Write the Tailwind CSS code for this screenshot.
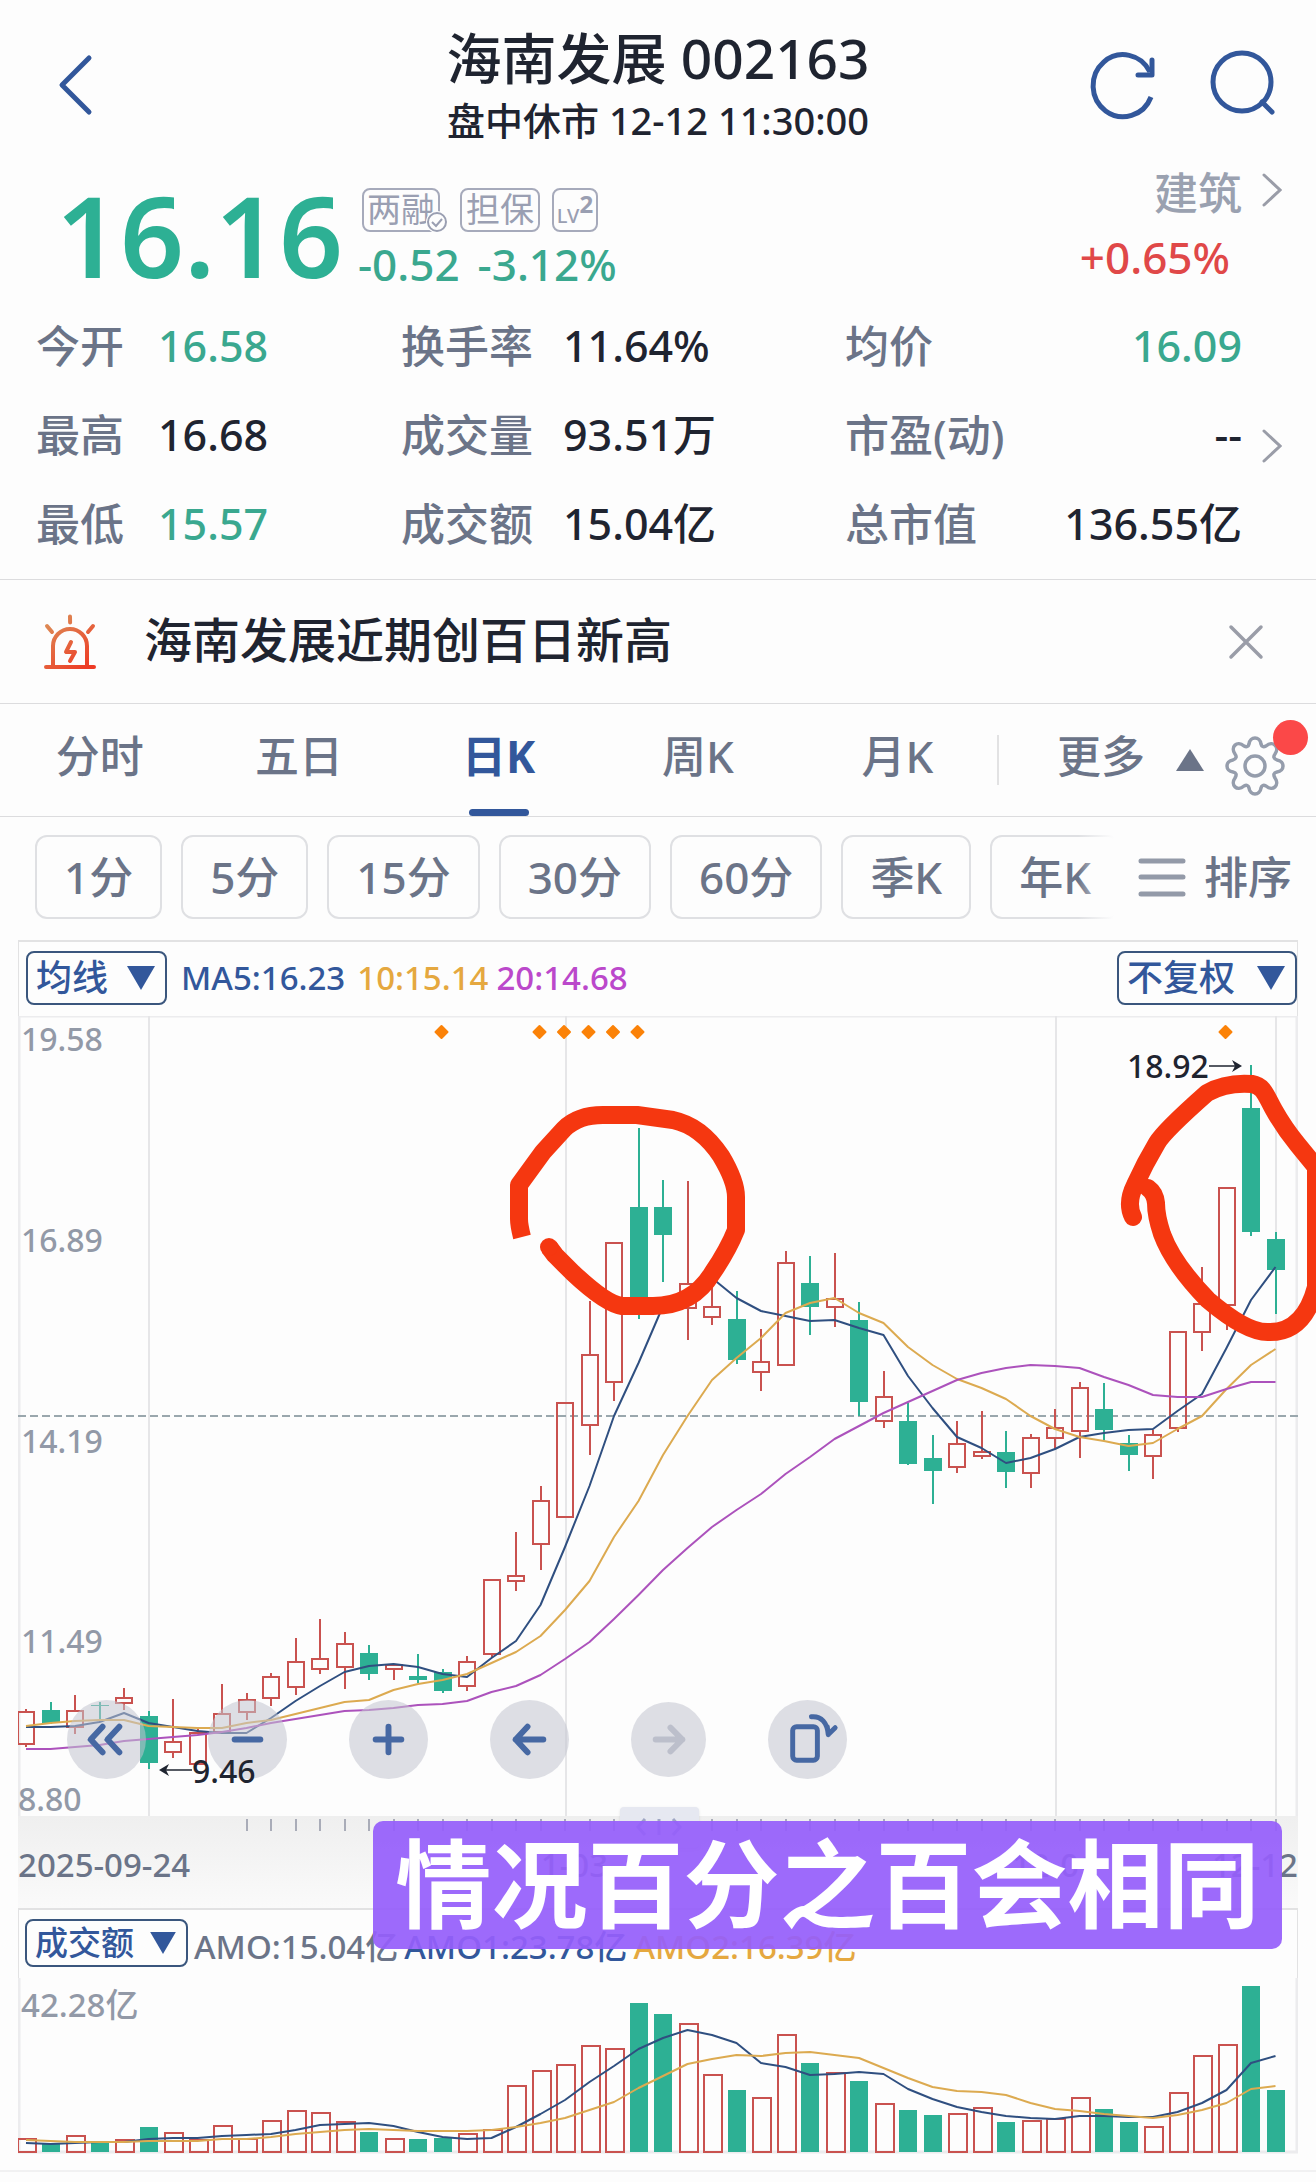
<!DOCTYPE html>
<html lang="zh-CN">
<head>
  <meta charset="UTF-8" />
  <meta name="viewport" content="width=device-width, initial-scale=1.0" />
  <title>海南发展 002163</title>
  <script src="https://cdn.jsdelivr.net/npm/@tailwindcss/browser@4"></script>
</head>
<body class="bg-[#fdfdfd] text-[#1f2430] font-medium font-['Noto_Sans','Noto_Sans_CJK_SC',sans-serif] overflow-x-hidden">

  <!-- Header -->
  <header class="flex items-start justify-between pt-7 pl-[58px] pr-[38px]">
    <button type="button" aria-label="返回" class="w-[172px] pt-[26px] text-[#32579b]">
      <svg class="w-9 h-[62px]" viewBox="0 0 36 62" fill="none" stroke="currentColor" stroke-width="5" stroke-linecap="round" stroke-linejoin="round">
        <path d="M31 4L4 31l27 27" />
      </svg>
    </button>
    <div class="text-center whitespace-nowrap">
      <h1 class="text-[55px] leading-[60px] font-medium">海南发展 002163</h1>
      <p class="mt-2 pb-1 text-[38px] leading-12">盘中休市 12-12 11:30:00</p>
    </div>
    <div class="flex gap-[52px] pt-[20px] text-[#32579b]">
      <button type="button" aria-label="刷新">
        <svg class="size-[70px] overflow-visible" viewBox="0 0 70 70" fill="none" stroke="currentColor" stroke-width="5">
          <path d="M65 49A30 31 0 1 1 64 24" />
          <path d="M66 12v15H52" stroke-linejoin="round" stroke-linecap="round" />
        </svg>
      </button>
      <button type="button" aria-label="搜索">
        <svg class="size-[70px]" viewBox="0 0 70 70" fill="none" stroke="currentColor" stroke-width="5" stroke-linecap="round">
          <ellipse cx="34" cy="34" rx="29" ry="29" />
          <path d="M54 54l10 10" />
        </svg>
      </button>
    </div>
  </header>

  <!-- Price -->
  <section class="flex pt-9 pl-[56px] pr-[34px] h-[142px] whitespace-nowrap">
    <div class="w-[302px] text-[112px] leading-[102px] font-semibold text-[#2db094]">16.16</div>
    <div class="flex-1">
      <div class="flex gap-5 pt-1 pl-1 text-[#9a9fb2]">
        <span class="relative border-2 border-[#a6aabb] rounded-lg w-[78px] h-[44px] text-[34px] leading-[38px] text-center font-normal">两融
          <svg class="absolute -right-[10px] -bottom-[3px] size-[22px] bg-[#fdfdfd] rounded-full" viewBox="0 0 22 22" fill="none" stroke="currentColor" stroke-width="2">
            <circle cx="11" cy="11" r="9" /><path d="M6 11l4 4 6-7" />
          </svg>
        </span>
        <span class="border-2 border-[#a6aabb] rounded-lg w-[80px] h-[44px] text-[34px] leading-[38px] text-center font-normal">担保</span>
        <span class="flex justify-center -ml-2 border-2 border-[#a6aabb] rounded-lg w-[46px] h-[44px]">
          <span class="self-end text-[20px] leading-7">LV</span><span class="text-[24px] leading-7 font-bold">2</span>
        </span>
      </div>
      <div class="flex gap-[18px] mt-1 text-[44px] leading-[56px] text-[#3aa88f]"><span>-0.52</span><span>-3.12%</span></div>
    </div>
    <a href="#" class="flex items-start gap-5">
      <span class="flex flex-col items-end">
        <span class="text-[44px] leading-[18px] text-[#9aa1b0]">建筑</span>
        <span class="mt-[27px] mr-3 text-[44px] leading-[56px] text-[#e04848]">+0.65%</span>
      </span>
      <svg class="-mt-[12px] w-5 h-9" viewBox="0 0 20 36" fill="none" stroke="#9a9da8" stroke-width="3" stroke-linecap="round"><path d="M2 3l16 15L2 33" /></svg>
    </a>
  </section>

  <!-- Figures -->
  <section class="flex items-center mt-3 pb-[10px] pl-9 pr-[34px] text-[43px] leading-[88px] whitespace-nowrap">
    <dl class="grid grid-cols-[122px_243px_162px_282px_1fr] auto-rows-[89px] flex-1">
      <dt class="text-[44px] text-[#6b7488]">今开</dt><dd class="text-[#3aa88f]">16.58</dd>
      <dt class="text-[44px] text-[#6b7488]">换手率</dt><dd>11.64%</dd>
      <div class="flex justify-between"><dt class="text-[44px] text-[#6b7488]">均价</dt><dd class="text-[#3aa88f]">16.09</dd></div>
      <dt class="text-[44px] text-[#6b7488]">最高</dt><dd>16.68</dd>
      <dt class="text-[44px] text-[#6b7488]">成交量</dt><dd>93.51万</dd>
      <div class="flex justify-between"><dt class="text-[44px] text-[#6b7488]">市盈(动)</dt><dd>--</dd></div>
      <dt class="text-[44px] text-[#6b7488]">最低</dt><dd class="text-[#3aa88f]">15.57</dd>
      <dt class="text-[44px] text-[#6b7488]">成交额</dt><dd>15.04亿</dd>
      <div class="flex justify-between"><dt class="text-[44px] text-[#6b7488]">总市值</dt><dd>136.55亿</dd></div>
    </dl>
    <a href="#" aria-label="更多指标" class="ml-5 mt-5">
      <svg class="w-5 h-9" viewBox="0 0 20 36" fill="none" stroke="#9a9da8" stroke-width="3" stroke-linecap="round"><path d="M2 3l16 15L2 33" /></svg>
    </a>
  </section>

  <!-- Alert -->
  <section class="flex items-center h-[124px] border-t border-[#dcdcde] pl-11 pr-[52px]">
    <svg class="w-[52px] h-[56px]" viewBox="0 0 52 56" fill="none" stroke="url(#siren)" stroke-width="4" stroke-linecap="round" stroke-linejoin="round">
      <defs>
        <linearGradient id="siren" gradientUnits="userSpaceOnUse" x1="8" y1="6" x2="44" y2="54"><stop stop-color="#dd8a55" /><stop offset="1" stop-color="#ee3a24" /></linearGradient>
      </defs>
      <path d="M9 52V32a17 17 0 0 1 34 0v20M2 53h48M26 2.500l.1 6M3 12l5 6M49 12l-5 6" />
      <path d="M27 28l-5 10h9l-5 9" />
    </svg>
    <p class="ml-12 flex-1 pb-1 text-[48px] leading-[60px]">海南发展近期创百日新高</p>
    <button type="button" aria-label="关闭">
      <svg class="size-9" viewBox="0 0 36 36" fill="none" stroke="#9a9da8" stroke-width="3.500" stroke-linecap="round"><path d="M3 3l30 30M33 3L3 33" /></svg>
    </button>
  </section>

  <!-- Period tabs -->
  <nav class="flex items-center h-[113px] border-t border-[#dcdcde] text-[44px] leading-[60px] text-[#6b7488] whitespace-nowrap">
    <div class="flex flex-1 h-full">
      <button type="button" class="flex-1 pb-2">分时</button>
      <button type="button" class="flex-1 pb-2">五日</button>
      <button type="button" class="relative flex-1 pb-2 font-bold text-[#32579b]">日K<span class="absolute left-1/2 bottom-0 -ml-[30px] w-[60px] h-[7px] rounded bg-[#32579b]"></span></button>
      <button type="button" class="flex-1 pb-2">周K</button>
      <button type="button" class="flex-1 pb-2">月K</button>
    </div>
    <button type="button" class="flex items-center w-[212px] my-auto">
      <span class="w-0.5 h-[50px] bg-[#e2e2e3]"></span>
      <span class="ml-[58px] mr-[31px] pb-2">更多</span>
      <svg class="w-7 h-[22px]" viewBox="0 0 28 22" fill="currentColor"><path d="M14 0l14 22H0z" /></svg>
    </button>
    <button type="button" aria-label="设置" class="relative mr-[31px] ml-4 mt-3">
      <svg class="w-[60px] h-[60px]" viewBox="-30 -30 60 60" fill="none" stroke="#959dac" stroke-width="3.500" stroke-linejoin="round">
        <path d="M-6 -22C-5 -30 5 -30 6 -22Q7 -18 11 -20C18 -26 25 -19 20 -12Q17 -8 22 -6C30 -5 30 5 22 6Q17 7 20 12C25 19 18 26 11 20Q7 18 6 22C5 30 -5 30 -6 22Q-7 18 -11 20C-18 26 -25 19 -20 12Q-17 7 -22 6C-30 5 -30 -5 -22 -6Q-17 -8 -20 -12C-25 -19 -18 -26 -11 -20Q-7 -18 -6 -22Z" />
        <circle r="10" />
      </svg>
      <span class="absolute -right-[23px] -top-[16px] size-[35px] rounded-full bg-[#fb4848]"></span>
    </button>
  </nav>

  <!-- Minute periods -->
  <div class="flex items-center h-[124px] border-t border-[#dcdcde] pl-[35px] pr-6 text-[44px] text-[#6b7488] whitespace-nowrap">
    <div class="relative flex flex-1 gap-[19px] overflow-hidden mb-1">
      <button type="button" class="shrink-0 h-[84px] px-[27px] border-2 border-[#dfe0e3] rounded-xl">1分</button>
      <button type="button" class="shrink-0 h-[84px] px-[27px] border-2 border-[#dfe0e3] rounded-xl">5分</button>
      <button type="button" class="shrink-0 h-[84px] px-[27px] border-2 border-[#dfe0e3] rounded-xl">15分</button>
      <button type="button" class="shrink-0 h-[84px] px-[27px] border-2 border-[#dfe0e3] rounded-xl">30分</button>
      <button type="button" class="shrink-0 h-[84px] px-[27px] border-2 border-[#dfe0e3] rounded-xl">60分</button>
      <button type="button" class="shrink-0 h-[84px] px-[27px] border-2 border-[#dfe0e3] rounded-xl">季K</button>
      <button type="button" class="shrink-0 h-[84px] px-[27px] border-2 border-[#dfe0e3] rounded-xl">年K</button>
      <span class="absolute inset-y-0 right-0 w-9 bg-linear-to-r from-[#fdfdfd]/0 to-[#fdfdfd]"></span>
    </div>
    <button type="button" class="flex items-center gap-[18px] pl-6 mb-1">
      <svg class="w-12 h-10" viewBox="0 0 48 40" stroke="#939aa8" stroke-width="5" stroke-linecap="round"><path d="M3 4h42M3 20h42M3 37h42" /></svg>
      排序
    </button>
  </div>

  <main class="mx-[18px]">
    <!-- Moving averages -->
    <div class="flex items-center justify-between h-[76px] border-t-2 border-x border-[#e2e2e3] pl-[7px] pb-[2px] text-[33px] text-[#32579b] whitespace-nowrap">
      <div class="flex items-center">
        <div class="relative">
          <select aria-label="指标" class="block appearance-none w-[141px] h-[54px] pl-[8px] border-2 border-[#3a567d] rounded-lg text-[36px] leading-[46px]"><option>均线</option></select>
          <svg class="absolute right-3 top-[15px] w-7 h-6 pointer-events-none" viewBox="0 0 28 24" fill="currentColor"><path d="M0 0h28L14 24z" /></svg>
        </div>
        <span class="ml-[14px]">MA5:16.23</span>
        <span class="ml-3 text-[#e5a83f]">10:15.14</span>
        <span class="ml-2 text-[#bb48cb]">20:14.68</span>
      </div>
      <div class="relative">
        <select aria-label="复权" class="block appearance-none w-[180px] h-[54px] pl-[8px] border-2 border-[#3a567d] rounded-lg text-[36px] leading-[46px]"><option>不复权</option></select>
        <svg class="absolute right-3 top-[15px] w-7 h-6 pointer-events-none" viewBox="0 0 28 24" fill="currentColor"><path d="M0 0h28L14 24z" /></svg>
      </div>
    </div>

    <!-- Candles -->
    <div class="relative">
      <svg class="block w-full h-auto" viewBox="0 0 1280 800">
        <path d="M1 0v800M1279 0v800M0 0h1280" stroke="#ececee" stroke-width="3" />
        <path d="M131 0v800M548 0v800M1038 0v800M1258 0v800" stroke="#e6e6e8" stroke-width="2" />
        <path d="M0 400h1280" stroke="#9aa7ad" stroke-width="2" stroke-dasharray="8 4" />
        <g id="diamonds" fill="#fb8208" stroke="#fb8208" stroke-width="2" stroke-linejoin="round"></g>
        <g id="candles" stroke-width="2"></g>
        <g id="averages" fill="none" stroke-width="2" stroke-linejoin="round"></g>
      </svg>
      <div class="absolute left-[49px] bottom-[37px] flex items-center gap-[62px] text-[#4668a3]">
        <button type="button" aria-label="快退" class="size-[79px] rounded-full bg-[#c3c5d0]/55">
          <svg class="size-full" viewBox="-40 -40 80 80" fill="none" stroke="currentColor" stroke-width="6" stroke-linecap="round" stroke-linejoin="round"><path d="M-4 -13L-16 0L-4 13M13 -13L1 0L13 13" /></svg>
        </button>
        <button type="button" aria-label="缩小" class="size-[79px] rounded-full bg-[#c3c5d0]/55">
          <svg class="size-full" viewBox="-40 -40 80 80" fill="none" stroke="currentColor" stroke-width="6" stroke-linecap="round"><path d="M-13 0h26" /></svg>
        </button>
        <button type="button" aria-label="放大" class="size-[79px] rounded-full bg-[#c3c5d0]/55">
          <svg class="size-full" viewBox="-40 -40 80 80" fill="none" stroke="currentColor" stroke-width="6" stroke-linecap="round"><path d="M-13 0h26M0 -13v26" /></svg>
        </button>
        <button type="button" aria-label="左移" class="size-[79px] rounded-full bg-[#c3c5d0]/55">
          <svg class="size-full" viewBox="-40 -40 80 80" fill="none" stroke="currentColor" stroke-width="6" stroke-linecap="round" stroke-linejoin="round"><path d="M14 0h-28M-2 -13L-14 0L-2 13" /></svg>
        </button>
        <button type="button" aria-label="右移" class="size-[75px] rounded-full bg-[#c3c5d0]/55 text-[#bcbfcb]" disabled>
          <svg class="size-full" viewBox="-38 -38 76 76" fill="none" stroke="currentColor" stroke-width="6" stroke-linecap="round" stroke-linejoin="round"><path d="M-13 0h27M2 -12L14 0L2 12" /></svg>
        </button>
        <button type="button" aria-label="横屏" class="size-[79px] rounded-full bg-[#c3c5d0]/55">
          <svg class="size-full" viewBox="-40 -40 80 80" fill="none" stroke="currentColor" stroke-width="5" stroke-linecap="round" stroke-linejoin="round"><rect x="-15" y="-13" width="25" height="34" rx="4" /><path d="M4 -23C14 -24 20 -17 21 -5M28 -12L21 -5L20 -13" /></svg>
        </button>
      </div>
      <!-- Labels and hand-drawn marks sit above the buttons -->
      <svg class="absolute inset-0 size-full overflow-visible pointer-events-none" viewBox="0 0 1280 800">
        <g class="text-[32px]" fill="#9299a7">
          <text x="3" y="35">19.58</text>
          <text x="3" y="236">16.89</text>
          <text x="3" y="437">14.19</text>
          <text x="3" y="637">11.49</text>
          <text x="0" y="795">8.80</text>
        </g>
        <g class="text-[32px]" fill="#1f2430">
          <text x="174" y="767">9.46</text>
          <text x="1109" y="62">18.92</text>
          <path d="M141 754l10 -6l-3 6l3 6zM1224 50l-10 -6l3 6l-3 6z" />
          <path d="M144 754h30M1191 50h30" stroke="#1f2430" stroke-width="1.500" />
        </g>
        <g fill="none" stroke="#f53710" stroke-width="18" stroke-linejoin="round">
          <path d="M504 221Q501 209 501 203V169L525 136L546 113Q560 99 585 99H619L655 104Q683 110 703 140Q718 165 718 181V214Q710 234 695 256Q675 290 635 290H604Q588 288 555 257L537 239L531 231" />
          <path d="M1115 201Q1108 187 1117 169Q1127 147 1139 127Q1146 115 1189 77Q1208 66 1234 68C1246 70 1248 80 1256 94Q1266 112 1280 129L1298 151V271Q1286 316 1252 316Q1230 318 1190 284Q1155 248 1144 218Q1138 200 1138 187Q1137 177 1130 172" stroke-linecap="round" />
        </g>
        <circle cx="531" cy="231" r="9" fill="#f53710" />
      </svg>
    </div>

    <!-- Date axis -->
    <div class="relative">
      <svg class="block w-full h-auto bg-linear-to-b from-[#efefef] to-[#fafafa]" viewBox="0 0 1280 92">
        <g id="ticks" stroke="#a9acb8" stroke-width="2"></g>
        <g class="text-[33px]" fill="#6b7488">
          <text x="0" y="61">2025-09-24</text>
          <text x="547" y="61" text-anchor="middle">11-03</text>
          <text x="1037" y="61" text-anchor="middle">12-01</text>
          <text x="1280" y="61" text-anchor="end">12-12</text>
        </g>
      </svg>
      <div class="absolute left-[47%] -top-[9px] flex justify-center w-[79px] h-[41px] rounded-sm bg-[#e6e8f1] shadow-sm">
        <svg class="w-12 h-full" viewBox="0 0 48 41" fill="none" stroke="#9fa6c4" stroke-width="3"><path d="M10 12L3 20L10 28M24 12v16M38 12L45 20L38 28" /></svg>
      </div>
      <p class="absolute z-10 left-[355px] right-4 top-[5px] h-[128px] rounded-[10px] bg-[#965ffb]/93 text-center text-[96px] leading-[124px] font-bold text-white whitespace-nowrap">情况百分之百会相同</p>
    </div>

    <!-- Turnover -->
    <div class="flex items-center h-[70px] border-t-2 border-x border-[#e2e2e3] pl-[6px] pb-[2px] text-[33px] text-[#6b7488] whitespace-nowrap">
      <div class="relative text-[#32579b]">
        <select aria-label="副图" class="block appearance-none w-[163px] h-[48px] pl-[8px] border-2 border-[#3a567d] rounded-lg text-[33px] leading-10"><option>成交额</option></select>
        <svg class="absolute right-3 top-[13px] w-[26px] h-[22px] pointer-events-none" viewBox="0 0 28 24" fill="currentColor"><path d="M0 0h28L14 24z" /></svg>
      </div>
      <span class="ml-[6px] pt-2">AMO:15.04亿</span>
      <span class="ml-[6px] pt-2 text-[#32579b]">AMO1:23.78亿</span>
      <span class="ml-[6px] pt-2 text-[#e5a83f]">AMO2:16.39亿</span>
    </div>
    <svg class="block w-full h-auto" viewBox="0 0 1280 176">
      <path d="M1 0v174H1279V0" fill="none" stroke="#ececee" stroke-width="3" />
      <text x="3" y="39" class="text-[33px]" fill="#9299a7">42.28亿</text>
      <g id="volumes" stroke-width="2"></g>
      <g id="volumeAverages" fill="none" stroke-width="2" stroke-linejoin="round"></g>
    </svg>
  </main>
  <div class="mt-4 border-t-2 border-[#f1f1f2]"></div>

  <script>
    const RED = '#c9524f', GREEN = '#2db094';
    const BLUE = '#2f4f80', GOLD = '#dcaa50', PURPLE = '#ac52bc';
    const x = i => 8 + 24.5 * i;

    // direction (1 up, 0 down), high, body top, body bottom, low, turnover
    const days = [
      [1,693,696,728,731,13],[0,686,694,707,708,9],[1,679,695,711,718,16],[0,686,689,690,706,10],[1,672,682,687,694,12],
      [0,695,700,747,753,25],[1,683,726,736,742,19],[1,712,717,748,748,12],[1,668,698,716,716,26],[1,677,684,696,704,13],
      [1,657,661,682,690,31],[1,622,646,671,679,41],[1,603,643,653,658,39],[1,616,628,651,673,30],[0,629,637,658,664,20],
      [1,648,649,653,664,13],[0,638,660,664,667,13],[0,653,656,675,677,14],[1,640,646,670,675,18],[1,564,564,638,642,22],
      [1,516,560,565,575,66],[1,470,485,528,554,81],[1,387,387,501,501,87],[1,285,339,409,439,106],[1,227,227,366,385,103],
      [0,112,191,295,303,149],[0,164,191,219,266,138],[1,165,268,292,324,128],[1,262,291,301,309,77],[0,275,303,344,348,62],
      [1,313,346,356,375,54],[1,235,247,349,349,117],[0,240,267,291,319,89],[1,237,283,291,311,79],[0,286,304,386,400,71],
      [1,355,381,405,412,48],[0,387,405,448,449,42],[0,419,442,455,488,37],[1,405,428,451,457,38],[1,395,436,440,443,44],
      [0,415,436,456,472,30],[1,418,422,457,472,31],[1,393,412,422,433,33],[1,366,372,415,442,54],[0,367,393,414,424,43],
      [0,419,427,439,455,30],[1,414,419,440,463,25],[1,316,316,412,416,59],[1,251,288,316,335,96],[1,172,172,289,314,107],
      [0,49,92,216,220,166],[0,216,223,254,298,62]
    ];

    const ma5 = [711,711,710,706,697,707,711,715,717,717,702,685,670,656,650,648,651,658,661,642,625,589,531,470,400,347,290,276,262,282,295,300,305,304,312,319,360,392,421,432,447,442,433,421,417,414,413,395,378,332,284,251];
    const ma10 = [710,707,705,704,704,710,711,712,712,707,704,698,692,686,684,674,668,664,658,647,636,620,594,565,521,485,439,400,364,342,322,297,287,282,297,307,331,349,363,372,383,400,413,421,425,430,427,413,400,373,349,333];
    const ma20 = [733,733,731,729,725,723,721,719,716,712,707,703,699,695,694,692,689,688,685,676,670,659,643,626,603,579,554,532,511,494,478,458,441,423,410,397,386,375,364,357,352,349,350,352,361,369,379,381,381,373,366,366];
    const amo1 = [165,166,165,164,164,161,160,160,158,157,156,152,147,146,145,148,154,159,161,160,149,136,122,104,88,71,60,52,57,65,85,89,97,96,94,96,111,121,129,134,138,140,141,138,138,139,139,134,125,112,85,78];
    const amo2 = [162,163,164,164,164,163,163,163,161,161,159,156,154,152,151,152,153,153,153,152,149,145,140,132,124,110,98,86,81,77,78,75,74,77,80,90,100,109,113,114,117,125,131,133,136,138,140,137,132,125,111,108];

    const line = (ys, color) => `<polyline stroke="${color}" points="${ys.map((y, i) => x(i) + ',' + y).join(' ')}"/>`;

    document.getElementById('candles').innerHTML = days.map(([up, high, top, bottom, low], i) => {
      const c = up ? RED : GREEN;
      const h = Math.max(bottom - top, 1);
      const cx = Math.round(x(i));
      const body = up
        ? `<rect x="${cx - 8}" y="${top}" width="16" height="${h}" fill="none" stroke="${c}"/>`
        : `<rect x="${cx - 9}" y="${top}" width="18" height="${h}" fill="${c}"/>`;
      return `<path d="M${cx} ${high}V${top}M${cx} ${bottom}V${low}" stroke="${c}"/>${body}`;
    }).join('');

    document.getElementById('volumes').innerHTML = days.map(([up, , , , , v], i) => up
      ? `<rect x="${Math.round(x(i)) - 8}" y="${174 - v}" width="18" height="${v}" fill="none" stroke="${RED}"/>`
      : `<rect x="${Math.round(x(i)) - 9}" y="${174 - v}" width="18" height="${v}" fill="${GREEN}"/>`
    ).join('');

    document.getElementById('averages').innerHTML = line(ma5, BLUE) + line(ma10, GOLD) + line(ma20, PURPLE);
    document.getElementById('volumeAverages').innerHTML = line(amo1, BLUE) + line(amo2, GOLD);

    document.getElementById('diamonds').innerHTML = [17, 21, 22, 23, 24, 25, 49]
      .map(i => `<path d="M${x(i) - 7} 16l6 -6l6 6l-6 6z"/>`).join('');

    document.getElementById('ticks').innerHTML = days
      .map((d, i) => i < 9 ? '' : `<path d="M${Math.round(x(i))} 3V15"/>`).join('');
  </script>
</body>
</html>
